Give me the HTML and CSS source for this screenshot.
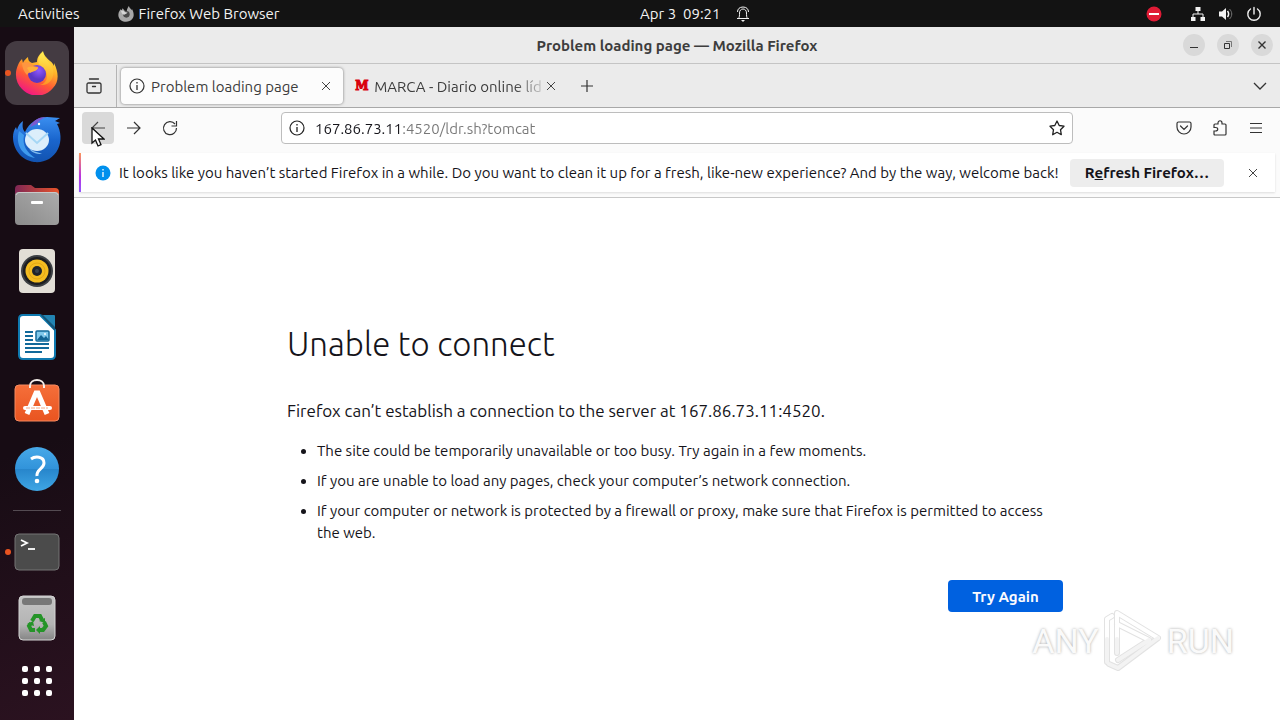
FILE: index.html
```html
<!DOCTYPE html>
<html lang="en">
<head>
  <meta charset="utf-8">
  <title>Problem loading page — Mozilla Firefox</title>
  <link rel="stylesheet" href="styles.css">
</head>
<body>
  <header class="topbar">
    <div class="topbar-left">
      <a class="activities" href="#">Activities</a>
      <a class="app-menu" href="#">
        <svg width="16" height="16" viewBox="0 0 44 44">
          <path d="M4 14l3-5 3 3 3-6 5 7 6 1C25 8 27 3 30 0c1 5 5 7 8 11l1-2c5 10 6 20 0 27-7 9-22 10-31 3C0 33-1 22 4 14z" fill="#a8a8a8"/>
          <circle cx="23" cy="23" r="9" fill="#4a4a4a"/>
          <path d="M8 13c6-1 10 1 13 4l5 1c-1 4-6 4-9 6-4 0-7-4-9-11z" fill="#d6d6d6"/>
        </svg>
        Firefox Web Browser
      </a>
    </div>
    <div class="clock">
      <span class="date">Apr 3&nbsp; 09:21</span>
      <svg width="16" height="16" viewBox="0 0 16 16" fill="none" stroke="#f2f2f2">
        <path d="M2 12.500h12M3.500 12.500c1-1.500 1-3 1-5.500 0-2.500 1.500-4 3.500-4s3.500 1.500 3.500 4c0 2.500 0 4 1 5.500M2.500 6C2.500 3 4.500 1 8 1s5.500 2 5.500 5"/>
        <path d="M6 14h4l-2 2z" fill="#f2f2f2" stroke="none"/>
      </svg>
    </div>
    <div class="status">
      <svg class="dnd" width="16" height="16" viewBox="0 0 16 16"><circle cx="8" cy="8" r="7.500" fill="#e01b36"/><path d="M3 8h10" stroke="#fff" stroke-width="2"/></svg>
      <svg width="16" height="16" viewBox="0 0 16 16" fill="#f2f2f2"><path d="M5.500 1h5v4h-5zM1 11h4.500v4H1zM10.500 11H15v4h-4.500z"/><path d="M8 4v4M3 12V8h10v4" fill="none" stroke="#f2f2f2"/></svg>
      <svg width="16" height="16" viewBox="0 0 16 16"><path d="M1 5.500h3L8 2v12l-4-3.500H1z" fill="#f2f2f2"/><path d="M9.500 5c1.500 2 1.500 4 0 6" fill="none" stroke="#f2f2f2" stroke-width="1.500"/><path d="M11.500 3c3 3 3 7 0 10" fill="none" stroke="#777"/></svg>
      <svg width="16" height="16" viewBox="0 0 16 16" fill="none" stroke="#f2f2f2" stroke-linecap="round"><path d="M8 1.500v6.500M4.500 3a6.200 6.200 0 1 0 7 0" stroke-width="1.400"/></svg>
    </div>
  </header>

  <div class="desktop">
    <nav class="dock">
      <a class="dock-item active running" href="#" aria-label="Firefox">
        <svg width="44" height="44" viewBox="0 0 44 44">
          <defs>
            <linearGradient id="fox" x1="0.800" y1="0" x2="0.300" y2="1">
              <stop offset="0" stop-color="#fff44f"/><stop offset=".35" stop-color="#ffb428"/><stop offset=".65" stop-color="#ff5a35"/><stop offset="1" stop-color="#f0128a"/>
            </linearGradient>
            <radialGradient id="globe" cx=".6" cy=".3"><stop offset="0" stop-color="#9059ff"/><stop offset="1" stop-color="#5b36c4"/></radialGradient>
            <linearGradient id="flame" x1="0" y1="0" x2="0" y2="1"><stop offset="0" stop-color="#fff35a"/><stop offset="1" stop-color="#ffa21f"/></linearGradient>
          </defs>
          <path d="M3 14c1-3 3-5 4-6l1 4c1-3 3-4 5-6 0 3 1 5 4 6l5-1c0-5 3-8 6-11 1 5 4 7 7 10 2 1 3 3 4 5v-3c5 10 5 19-1 25-8 10-23 10-31 1C1 32-1 23 3 14z" fill="url(#fox)"/>
          <path d="M28 1c-4 4-6 8-4 12 2 3 8 5 8 12 0 5-3 8-7 9 10 1 15-8 13-16-2-7-9-9-10-17z" fill="url(#flame)" opacity=".8"/>
          <circle cx="22" cy="23" r="9" fill="url(#globe)"/>
          <path d="M7 12c5-2 9 0 11 3l5 1c1 2-4 4-6 5-2 0-4 1-5 3-3-3-5-8-5-12z" fill="#ff9640"/>
          <path d="M12 17c3-2 7-1 11 0-2 4-6 3-8 5z" fill="#ffb03b"/>
        </svg>
      </a>
      <a class="dock-item" href="#" aria-label="Thunderbird">
        <svg width="50" height="48" viewBox="0 0 50 48">
          <defs><linearGradient id="bird" x1="0" y1="0" x2="0" y2="1"><stop offset="0" stop-color="#3b8ff0"/><stop offset=".5" stop-color="#1a66ce"/><stop offset="1" stop-color="#1253b0"/></linearGradient></defs>
          <path d="M1 22c0-4 1-7 3-10l1 3c1-4 3-7 6-9-1 6 0 9 2 11C17 8 26 2 35 2c5 0 9 1 13 1l-5 3 5 2-3 1c4 7 5 17 1 25-5 10-14 14-24 13C9 45 1 34 1 22z" fill="url(#bird)"/>
          <path d="M7 16c-4 13 3 25 16 27-8-6-13-12-11-23z" fill="#3f9bee"/>
          <path d="M18 12c3-7 9-10 16-10-5 2-8 4-9 7z" fill="#7b59cf"/>
          <ellipse cx="25" cy="25" rx="12" ry="11" fill="#dceefb"/>
          <path d="M14 18l11 10 11-10" fill="none" stroke="#a6d7f5" stroke-width="2"/>
          <path d="M17 33c4 4 9 4 13 6-7 0-11-2-13-6z" fill="#83bdf0"/>
          <circle cx="27" cy="9" r="1.200" fill="#fff"/>
        </svg>
      </a>
      <a class="dock-item" href="#" aria-label="Files">
        <svg width="46" height="42" viewBox="0 0 46 42">
          <defs>
            <linearGradient id="folder"><stop offset="0" stop-color="#7f2755"/><stop offset="1" stop-color="#e9542a"/></linearGradient>
            <linearGradient id="drawer" x1="0" y1="1" x2="1" y2="0"><stop offset="0" stop-color="#8b8b8b"/><stop offset="1" stop-color="#acacac"/></linearGradient>
          </defs>
          <path d="M1 5q0-4 4-4h12l4 3h20q4 0 4 4v12H1z" fill="url(#folder)"/>
          <rect x="1" y="8" width="44" height="33" rx="4" fill="url(#drawer)"/>
          <path d="M2 11q1-2.500 3-2.500h36q2 0 3 2.500" stroke="#c9c9c9" fill="none"/>
          <rect x="17" y="17" width="12" height="3" rx="1" fill="#fff"/>
        </svg>
      </a>
      <a class="dock-item" href="#" aria-label="Rhythmbox">
        <svg width="38" height="46" viewBox="0 0 38 46">
          <rect x="1" y="1" width="36" height="44" rx="4" fill="#e2ded6"/>
          <circle cx="19" cy="23" r="16" fill="#3c3f43"/><circle cx="19" cy="23" r="14" fill="#1d1d20"/>
          <circle cx="19" cy="23" r="11.500" fill="#f4bc20"/><circle cx="19" cy="23" r="8" fill="none" stroke="#e3a815"/>
          <circle cx="19" cy="23" r="5" fill="#1f242b"/><circle cx="19" cy="23" r="2" fill="#39434e"/>
        </svg>
      </a>
      <a class="dock-item" href="#" aria-label="LibreOffice Writer">
        <svg width="38" height="46" viewBox="0 0 38 46">
          <path d="M5 1h17l15 15v25q0 4-4 4H5q-4 0-4-4V5q0-4 4-4z" fill="#fff" stroke="#0f7ab0" stroke-width="2"/>
          <path d="M22 0l15 17V5z" fill="#155577"/><path d="M25 1h11q1 0 1 1v11z" fill="#2284b2"/>
          <path d="M7 18h8M7 22h8M7 26h8M7 30h24M7 34h24M7 38h17" stroke="#12699a" stroke-width="2"/>
          <rect x="18" y="17" width="13" height="10" rx="1" fill="#80c8eb" stroke="#12699a" stroke-width="1.500"/>
          <path d="M19 26l4-5 3 3 2-2 3 4z" fill="#126494"/>
          <circle cx="27" cy="20" r="1" fill="#fff"/>
        </svg>
      </a>
      <a class="dock-item" href="#" aria-label="Ubuntu Software">
        <svg width="46" height="48" viewBox="0 0 46 48">
          <defs><linearGradient id="bag" x1="0" y1="0" x2="0" y2="1"><stop offset="0" stop-color="#f56f3a"/><stop offset="1" stop-color="#e95420"/></linearGradient></defs>
          <rect x="1" y="6" width="44" height="36" rx="4" fill="url(#bag)" stroke="#f58a60"/>
          <path d="M16 9V7c0-8 14-8 14 0v2" fill="none" stroke="#f5eee9" stroke-width="2"/>
          <path d="M13 35l9-21h2l9 21" fill="none" stroke="#fff" stroke-width="5"/>
          <path d="M11 29h25" stroke="#fff" stroke-width="4" stroke-linecap="round"/>
          <path d="M12 29h22" stroke="#f3aa88" stroke-dasharray="4 1"/>
        </svg>
      </a>
      <a class="dock-item" href="#" aria-label="Help">
        <svg width="46" height="46" viewBox="0 0 46 46">
          <defs><linearGradient id="help" x1="0" y1="0" x2="0" y2="1"><stop offset="0" stop-color="#47a9e8"/><stop offset=".5" stop-color="#3193da"/><stop offset=".5" stop-color="#2785cb"/><stop offset="1" stop-color="#3fa6e5"/></linearGradient></defs>
          <circle cx="23" cy="23" r="22" fill="url(#help)"/>
          <path d="M17 13c4-3 13-3 13 4 0 6-8 6-7 13" fill="none" stroke="#fff" stroke-width="3"/>
          <circle cx="23" cy="35" r="2.300" fill="#fff"/>
        </svg>
      </a>
      <hr class="dock-line">
      <a class="dock-item running" href="#" aria-label="Terminal">
        <svg width="46" height="38" viewBox="0 0 46 38">
          <rect x="1" y="1" width="44" height="36" rx="4" fill="#4b4b4b" stroke="#747474"/>
          <path d="M7 7l6 3-6 3" fill="none" stroke="#fff" stroke-width="1.800"/><path d="M14 16h7" stroke="#fff" stroke-width="1.800"/>
        </svg>
      </a>
      <a class="dock-item" href="#" aria-label="Trash">
        <svg width="38" height="46" viewBox="0 0 38 46">
          <defs><linearGradient id="bin" x1="0" y1="0" x2="0" y2="1"><stop offset="0" stop-color="#c4c4c4"/><stop offset=".65" stop-color="#b4b4b4"/><stop offset="1" stop-color="#858585"/></linearGradient></defs>
          <rect x="1" y="1" width="36" height="44" rx="4" fill="url(#bin)" stroke="#d4d4d4"/>
          <rect x="4" y="3" width="30" height="7" rx="3" fill="#777"/>
          <g fill="none" stroke="#259428" stroke-width="4">
            <path d="M14 26l3-5h5l2 4"/><path d="M26 27l2 4-3 4h-4"/><path d="M17 35h-4l-2-4 2-3"/>
          </g>
          <path d="M21 26l6-3v5zM22 31v8l-4-4zM9 29l6-3 1 5z" fill="#259428"/>
        </svg>
      </a>
      <a class="dock-item apps" href="#" aria-label="Show Applications">
        <svg width="32" height="32" viewBox="0 0 32 32" fill="#fff">
          <rect x="1" y="1" width="6" height="6" rx="2"/><rect x="13" y="1" width="6" height="6" rx="2"/><rect x="25" y="1" width="6" height="6" rx="2"/>
          <rect x="1" y="13" width="6" height="6" rx="2"/><rect x="13" y="13" width="6" height="6" rx="2"/><rect x="25" y="13" width="6" height="6" rx="2"/>
          <rect x="1" y="25" width="6" height="6" rx="2"/><rect x="13" y="25" width="6" height="6" rx="2"/><rect x="25" y="25" width="6" height="6" rx="2"/>
        </svg>
      </a>
    </nav>

    <div class="window">
      <div class="titlebar">
        <span class="window-title">Problem loading page — Mozilla Firefox</span>
        <div class="window-buttons">
          <button type="button" aria-label="Minimize"><svg width="16" height="16" viewBox="0 0 16 16"><path d="M4 10.500h8" stroke="#333"/></svg></button>
          <button type="button" aria-label="Restore"><svg width="16" height="16" viewBox="0 0 16 16" fill="none" stroke="#333"><path d="M4.500 6.500h5v5h-5z"/><path d="M6 4.500h5.500V10" stroke="#777"/></svg></button>
          <button type="button" aria-label="Close window"><svg width="16" height="16" viewBox="0 0 16 16"><path d="M4.500 4.500l7 7m0-7l-7 7" stroke="#333" stroke-width="1.400"/></svg></button>
        </div>
      </div>

      <div class="tabs-bar">
        <button class="view-button" type="button" aria-label="Firefox View">
          <svg width="16" height="16" viewBox="0 0 16 16" fill="none" stroke="#333" stroke-width="1.300" stroke-linecap="round"><path d="M3.500 1h9M2.500 5q-1.500 0-1.500 1.500v7q0 1.500 1.500 1.500h11q1.500 0 1.500-1.500v-7Q15 5 13.500 5zM6.500 8.500h3"/></svg>
        </button>
        <div class="tab selected">
          <svg width="16" height="16" viewBox="0 0 16 16"><circle cx="8" cy="8" r="7" fill="none" stroke="#333" stroke-width="1.200"/><path d="M8 7v5M8 4v1.500" stroke="#333" stroke-width="1.300"/></svg>
          <span class="tab-label">Problem loading page</span>
          <button class="tab-close" type="button" aria-label="Close tab"><svg width="10" height="10" viewBox="0 0 10 10"><path d="M1 1l8 8m0-8L1 9" stroke="#444"/></svg></button>
        </div>
        <div class="tab">
          <span class="marca">M</span>
          <span class="tab-label fading">MARCA - Diario online líd</span>
          <button class="tab-close" type="button" aria-label="Close tab"><svg width="10" height="10" viewBox="0 0 10 10"><path d="M1 1l8 8m0-8L1 9" stroke="#444"/></svg></button>
        </div>
        <button class="tool-button" type="button" aria-label="New tab"><svg width="16" height="16" viewBox="0 0 16 16"><path d="M8 2v12M2 8h12" stroke="#333" stroke-width="1.200"/></svg></button>
        <button class="tool-button all-tabs" type="button" aria-label="List all tabs"><svg width="16" height="16" viewBox="0 0 16 16"><path d="M2 5l6 6 6-6" fill="none" stroke="#333" stroke-width="1.300"/></svg></button>
      </div>

      <div class="nav-bar">
        <button class="tool-button pressed" type="button" aria-label="Back"><svg width="16" height="16" viewBox="0 0 16 16"><path d="M15 8H2m6-6L2 8l6 6" fill="none" stroke="#444" stroke-width="1.200"/></svg>
          <svg class="pointer" width="14" height="20" viewBox="0 0 14 20"><path d="M1 1v15l3.500-3 2.500 6 3-1.300-2.500-5.700H13z" fill="#fff" stroke="#111" stroke-width="1.300"/></svg>
        </button>
        <button class="tool-button" type="button" aria-label="Forward"><svg width="16" height="16" viewBox="0 0 16 16"><path d="M1 8h13M8 2l6 6-6 6" fill="none" stroke="#333" stroke-width="1.200"/></svg></button>
        <button class="tool-button" type="button" aria-label="Reload"><svg width="16" height="16" viewBox="0 0 16 16"><path d="M13 4a6.500 6.500 0 1 0 1.500 4M14.500 1v5h-5" fill="none" stroke="#333" stroke-width="1.200"/></svg></button>
        <div class="url-bar">
          <svg width="16" height="16" viewBox="0 0 16 16"><circle cx="8" cy="8" r="7" fill="none" stroke="#222" stroke-width="1.200"/><path d="M8 7v5M8 4v1.500" stroke="#222" stroke-width="1.300"/></svg>
          <input class="url-input" type="text" aria-label="Address" value="167.86.73.11:4520/ldr.sh?tomcat">
          <button class="bookmark" type="button" aria-label="Bookmark this page"><svg width="16" height="16" viewBox="0 0 16 16"><path d="M8 1l2.200 4.500 4.800.7-3.500 3.500.8 5L8 12.300l-4.300 2.400.8-5L1 6.200l4.800-.7z" fill="none" stroke="#222" stroke-width="1.300" stroke-linejoin="round"/></svg></button>
        </div>
        <button class="tool-button" type="button" aria-label="Save to Pocket"><svg width="16" height="16" viewBox="0 0 16 16" fill="none" stroke="#333" stroke-width="1.200" stroke-linecap="round"><path d="M2.500 2h11q1.500 0 1.500 1.500V7a7 7 0 0 1-14 0V3.500Q1 2 2.500 2z"/><path d="M4.500 6l3.500 3.500L11.500 6"/></svg></button>
        <button class="tool-button" type="button" aria-label="Extensions"><svg width="16" height="16" viewBox="0 0 16 16"><path d="M3 15q-1 0-1-1v-3h1.500c3 0 3-3.500 0-3.500H2V5q0-1 1-1h3V3c0-3 4-3 4 0v1h3q1 0 1 1v9q0 1-1 1z" fill="none" stroke="#333" stroke-width="1.200"/></svg></button>
        <button class="tool-button" type="button" aria-label="Menu"><svg width="16" height="16" viewBox="0 0 16 16"><path d="M2 3.500h12M2 8h12M2 12.500h12" stroke="#333" stroke-width="1.200"/></svg></button>
      </div>

      <div class="notice-area">
        <div class="notice">
          <svg width="16" height="16" viewBox="0 0 16 16"><circle cx="8" cy="8" r="7.500" fill="#0090ed"/><path d="M8 7v5M8 4v1.500" stroke="#fff" stroke-width="1.300"/></svg>
          <span class="notice-text">It looks like you haven’t started Firefox in a while. Do you want to clean it up for a fresh, like-new experience? And by the way, welcome back!</span>
          <button class="refresh" type="button">R<u>e</u>fresh Firefox…</button>
          <button class="notice-close" type="button" aria-label="Close message"><svg width="10" height="10" viewBox="0 0 10 10"><path d="M1 1l8 8m0-8L1 9" stroke="#444"/></svg></button>
        </div>
      </div>

      <main class="page">
        <div class="error">
          <h1>Unable to connect</h1>
          <p>Firefox can’t establish a connection to the server at 167.86.73.11:4520.</p>
          <ul>
            <li>The site could be temporarily unavailable or too busy. Try again in a few moments.</li>
            <li>If you are unable to load any pages, check your computer’s network connection.</li>
            <li>If your computer or network is protected by a firewall or proxy, make sure that Firefox is permitted to access the web.</li>
          </ul>
          <button class="try-again" type="button">Try Again</button>
        </div>
        <div class="watermark">
          <span>ANY</span>
          <svg width="60" height="64" viewBox="0 0 60 64" fill="none" stroke-linejoin="round" stroke-linecap="round">
            <g stroke="#e2e2e2" stroke-width="6"><path d="M4 53V10l5-3"/><path d="M14 44V4l41 25-40 30-9-4"/><path d="M14 15l32 16-31 20"/></g>
            <path d="M4 30V10l5-3M14 30V4l41 25M14 15l32 16" stroke="#fff" stroke-width="4"/>
            <path d="M4 53V30M14 44V30M55 29L15 59l-9-4M46 31L15 51" stroke="#f3f3f3" stroke-width="4"/>
          </svg>
          <span>RUN</span>
        </div>
      </main>
    </div>
  </div>
</body>
</html>
```
FILE: styles.css
```css
* {
  box-sizing: border-box;
}

body {
  display: flex;
  flex-direction: column;
  min-height: 100vh;
  margin: 0;
  font-family: Ubuntu, "Noto Sans", sans-serif;
  font-size: 15px;
  color: #15141a;
}

svg {
  display: block;
  flex: none;
}

a {
  color: inherit;
  text-decoration: none;
}

button {
  display: flex;
  align-items: center;
  justify-content: center;
  padding: 0;
  border: none;
  background: none;
  color: inherit;
  font: inherit;
}

/* Top bar */
.topbar {
  display: grid;
  grid-template-columns: 50% 1fr auto;
  align-items: center;
  height: 27px;
  padding: 0 18px;
  background-color: #131313;
  color: #f2f2f2;
}

.topbar-left,
.app-menu,
.clock,
.status {
  display: flex;
  align-items: center;
}

.topbar-left {
  gap: 38px;
}

.app-menu {
  gap: 5px;
}

.clock {
  gap: 14px;
}

.status {
  gap: 12px;
}

.dnd {
  margin-right: 16px;
}

.desktop {
  display: flex;
  flex: 1;
}

/* Dock */
.dock {
  display: flex;
  flex-direction: column;
  align-items: center;
  gap: 2px;
  width: 74px;
  padding-top: 14px;
  background: linear-gradient(160deg, #170c14 60%, #2b1220);
}

.dock-item {
  display: flex;
  align-items: center;
  justify-content: center;
  position: relative;
  width: 64px;
  height: 64px;
  border-radius: 12px;
}

.dock-item.active {
  background-color: #443b42;
}

.dock-item.running::before {
  content: '';
  position: absolute;
  left: 0;
  top: 29px;
  width: 6px;
  height: 6px;
  border-radius: 50%;
  background-color: #e95420;
}

.dock-item.apps {
  height: 58px;
}

.dock-line {
  width: 48px;
  height: 1px;
  margin: 7px 0;
  border: none;
  background-color: #544b52;
}

/* Firefox window */
.window {
  display: flex;
  flex: 1;
  flex-direction: column;
  min-width: 0;
  background-color: #fff;
}

.titlebar {
  display: grid;
  grid-template-columns: 1fr auto 1fr;
  align-items: center;
  height: 37px;
  padding: 0 7px;
  border-bottom: 1px solid #c4c4c4;
  background-color: #ebebeb;
}

.window-title {
  grid-column: 2;
  color: #3d3d3d;
  font-weight: bold;
}

.window-buttons {
  display: flex;
  justify-content: flex-end;
  gap: 12px;
}

.window-buttons button {
  width: 22px;
  height: 22px;
  border-radius: 50%;
  background-color: #d9d9d9;
}

.tabs-bar {
  display: flex;
  align-items: center;
  height: 44px;
  padding: 1px 4px 0 0;
  border-bottom: 1px solid #a8a8a8;
  background-color: #ebebeb;
}

.view-button {
  align-self: stretch;
  width: 43px;
  margin-right: 4px;
  padding-right: 2px;
  border-right: 1px solid #b4b4b4;
}

.tab {
  display: flex;
  align-items: center;
  justify-content: space-between;
  width: 222px;
  height: 36px;
  margin-right: 3px;
  padding: 0 8px;
  border-radius: 4px;
  color: #3c3c3c;
}

.tab.selected {
  background-color: #fcfcfc;
  box-shadow: 0 0 3px rgba(0, 0, 0, 0.5);
}

.tab-label {
  flex: 1;
  min-width: 0;
  padding-left: 6px;
  white-space: nowrap;
}

.tab-label.fading {
  flex: none;
  padding-left: 4px;
  mask-image: linear-gradient(to left, rgba(0, 0, 0, 0.2), #000 28px);
}

.tab-close {
  flex: none;
  width: 18px;
  height: 18px;
}

.marca {
  flex: none;
  width: 16px;
  color: #d9000d;
  font-family: "DejaVu Serif", serif;
  font-size: 12px;
  font-weight: bold;
  text-align: center;
  -webkit-text-stroke: 1px #d9000d;
}

.tool-button {
  position: relative;
  width: 32px;
  height: 32px;
  border-radius: 4px;
}

.tool-button.pressed {
  background-color: #d9d9d9;
}

.all-tabs {
  margin-left: auto;
}

.pointer {
  position: absolute;
  left: 9px;
  top: 15px;
}

.nav-bar {
  display: flex;
  align-items: center;
  gap: 4px;
  height: 45px;
  padding: 0 8px 5px;
  background-color: #fbfbfb;
}

.url-bar {
  display: flex;
  flex: 1;
  align-items: center;
  height: 32px;
  margin: 0 91px;
  padding: 0 7px;
  border: 1px solid #bdbdbd;
  border-radius: 4px;
  background-color: #fff;
}

/* The host part of the address is darker than the rest */
.url-input {
  flex: 1;
  min-width: 0;
  padding: 0;
  margin: 0 10px;
  border: none;
  outline: none;
  background: linear-gradient(to right, #15141a 88px, #777 88px);
  background-clip: text;
  -webkit-background-clip: text;
  color: transparent;
  font: inherit;
}

.notice-area {
  padding: 0 5px 5px;
  border-bottom: 1px solid #c8c8c8;
  background-color: #fbfbfb;
}

.notice {
  display: flex;
  align-items: center;
  min-height: 39px;
  padding: 0 13px 0 14px;
  border-left: 2px solid;
  border-image: linear-gradient(#ff9a56, #b833e1 60%, #9059ff) 1;
  background-color: #fff;
  box-shadow: 0 1px 2px rgba(0, 0, 0, 0.12);
}

.notice-text {
  flex: 1;
  margin-left: 8px;
}

.refresh {
  height: 28px;
  padding: 0 15px;
  border-radius: 4px;
  background-color: #ededed;
  font-weight: bold;
  white-space: nowrap;
}

.notice-close {
  width: 18px;
  height: 18px;
  margin-left: 20px;
}

/* Error page */
.page {
  position: relative;
  flex: 1;
  padding: 122px 48px 48px;
}

.error {
  max-width: 780px;
  margin: 0 auto;
}

.error h1 {
  margin: 0;
  font-size: 33px;
  font-weight: 300;
  line-height: 48px;
}

.error p {
  margin: 31px 0 17px;
  font-size: 17px;
  line-height: 24px;
}

.error ul {
  margin: 0;
  padding-left: 30px;
}

.error li {
  margin-bottom: 8px;
  line-height: 22px;
}

.try-again {
  min-width: 115px;
  height: 32px;
  margin: 36px 4px 0 auto;
  border-radius: 4px;
  background-color: #0061e0;
  color: #fbfbfe;
  font-weight: bold;
}

.watermark {
  display: flex;
  align-items: center;
  gap: 4px;
  position: absolute;
  right: 46px;
  bottom: 47px;
  color: #fafafa;
  font-family: Roboto, sans-serif;
  font-size: 34px;
  line-height: 64px;
  text-shadow: 0 0 3px rgba(0, 0, 0, 0.35);
}
```
